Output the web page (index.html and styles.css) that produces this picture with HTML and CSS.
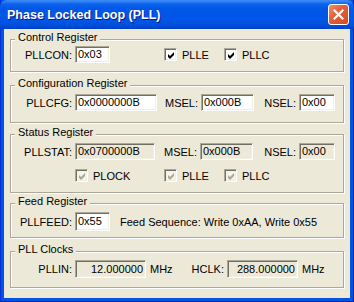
FILE: index.html
```html
<!DOCTYPE html>
<html lang="en">

<head>
    <meta charset="UTF-8">
    <title>Phase Locked Loop (PLL)</title>
    <link rel="stylesheet" href="styles.css">
</head>

<body>
    <div class="window">
        <div class="titlebar">
            <span class="title">Phase Locked Loop (PLL)</span>
            <span class="close-btn">
                <svg width="19" height="19" viewBox="0 0 19 19">
                    <path d="M5.5 5.5 L13.5 13.5 M13.5 5.5 L5.5 13.5" stroke="#fff" stroke-width="2.2" stroke-linecap="square" />
                </svg>
            </span>
        </div>

        <div class="client">
            <!-- Control Register -->
            <div class="group g1">
                <div class="group-title">Control Register</div>
                <div class="row row-first">
                    <span class="lbl">PLLCON:</span>
                    <span class="field w35">0x03</span>
                    <span class="chk-item chk-push w60">
                        <span class="chk"><svg width="9" height="9" viewBox="0 0 9 9"><path d="M1 3 L3 5 L7 1 L7 4 L3 8 L1 6 Z" fill="#000" /></svg></span>PLLE
                    </span>
                    <span class="chk-item">
                        <span class="chk"><svg width="9" height="9" viewBox="0 0 9 9"><path d="M1 3 L3 5 L7 1 L7 4 L3 8 L1 6 Z" fill="#000" /></svg></span>PLLC
                    </span>
                </div>
            </div>

            <!-- Configuration Register -->
            <div class="group g2">
                <div class="group-title">Configuration Register</div>
                <div class="row">
                    <span class="lbl">PLLCFG:</span>
                    <span class="field w82">0x0000000B</span>
                    <span class="lbl-mid w41">MSEL:</span>
                    <span class="field w53">0x000B</span>
                    <span class="lbl-mid w42">NSEL:</span>
                    <span class="field w36">0x00</span>
                </div>
            </div>

            <!-- Status Register -->
            <div class="group g3">
                <div class="group-title">Status Register</div>
                <div class="row">
                    <span class="lbl">PLLSTAT:</span>
                    <span class="field disabled w80">0x0700000B</span>
                    <span class="lbl-mid w42">MSEL:</span>
                    <span class="field disabled w53">0x000B</span>
                    <span class="lbl-mid w43">NSEL:</span>
                    <span class="field disabled w36">0x00</span>
                </div>
                <div class="row row-checks">
                    <span class="chk-item w89">
                        <span class="chk disabled"><svg width="9" height="9" viewBox="0 0 9 9"><path d="M1 3 L3 5 L7 1 L7 4 L3 8 L1 6 Z" fill="#ACA899" /></svg></span>PLOCK
                    </span>
                    <span class="chk-item w60">
                        <span class="chk disabled"><svg width="9" height="9" viewBox="0 0 9 9"><path d="M1 3 L3 5 L7 1 L7 4 L3 8 L1 6 Z" fill="#ACA899" /></svg></span>PLLE
                    </span>
                    <span class="chk-item">
                        <span class="chk disabled"><svg width="9" height="9" viewBox="0 0 9 9"><path d="M1 3 L3 5 L7 1 L7 4 L3 8 L1 6 Z" fill="#ACA899" /></svg></span>PLLC
                    </span>
                </div>
            </div>

            <!-- Feed Register -->
            <div class="group g4">
                <div class="group-title">Feed Register</div>
                <div class="row">
                    <span class="lbl">PLLFEED:</span>
                    <span class="field tall w35">0x55</span>
                    <span class="note">Feed Sequence: Write 0xAA, Write 0x55</span>
                </div>
            </div>

            <!-- PLL Clocks -->
            <div class="group g5">
                <div class="group-title">PLL Clocks</div>
                <div class="row">
                    <span class="lbl">PLLIN:</span>
                    <span class="field disabled num mid w71">12.000000</span>
                    <span class="unit w29">MHz</span>
                    <span class="lbl-mid w45">HCLK:</span>
                    <span class="field disabled num mid w71">288.000000</span>
                    <span class="unit">MHz</span>
                </div>
            </div>
        </div>
    </div>
</body>

</html>
```

FILE: styles.css
```css
body {
    margin: 0;
    font-family: "Liberation Sans", Arial, sans-serif;
    font-size: 11px;
    color: #000;
}

.window {
    width: 354px;
    height: 302px;
    display: flex;
    flex-direction: column;
    background-color: #0054E3;
    box-shadow: inset 1px 0 #0831D9, inset -1px 0 #001EA0, inset 0 -1px #001EA0;
    box-sizing: border-box;
}

/* title bar */
.titlebar {
    height: 29px;
    display: flex;
    align-items: center;
    justify-content: space-between;
    padding: 0 5px 0 7px;
    box-sizing: border-box;
    border-radius: 7px 7px 0 0;
    background: linear-gradient(#3D8DF8 0, #2A7CF5 2px, #0E63EC 4px, #0058E8 8px, #0056E6 20px, #0050DC 25px, #0040C4 29px);
}

.title {
    color: #fff;
    font-weight: bold;
    font-size: 12.5px;
    text-shadow: 1px 1px #0A1A8A;
    margin-top: 1px;
}

.close-btn {
    width: 21px;
    height: 21px;
    box-sizing: border-box;
    border: 1px solid #fff;
    border-radius: 3px;
    background: linear-gradient(135deg, #F0916E 0, #E2613D 40%, #D24A22 100%);
    display: flex;
    align-items: center;
    justify-content: center;
}

/* client area */
.client {
    flex-grow: 1;
    margin: 0 4px 4px;
    background-color: #ECE9D8;
    padding: 10px 0 0 6px;
    display: flex;
    flex-direction: column;
}

.group {
    width: 334px;
    box-sizing: border-box;
    border: 1px solid #ACA899;
    box-shadow: inset 1px 1px #fff, 1px 1px #fff;
    display: flex;
    flex-direction: column;
}

.g1 { height: 33px; }
.g2 { height: 38px; margin-top: 13px; }
.g3 { height: 59px; margin-top: 11px; }
.g4 { height: 35px; margin-top: 10px; }
.g5 { height: 37px; margin-top: 13px; }

.group-title {
    align-self: flex-start;
    margin: -9px 0 0 4px;
    padding: 0 3px;
    line-height: 13px;
    background-color: #ECE9D8;
}

/* rows */
.row {
    display: flex;
    align-items: center;
    margin-top: 4px;
}

.row-first {
    margin-top: 2px;
}

.row-checks {
    margin-top: 9px;
    padding-left: 64px;
}

.lbl {
    width: 61px;
    margin-right: 3px;
    text-align: right;
    white-space: nowrap;
}

.lbl-mid {
    margin-right: 3px;
    text-align: right;
}

.field {
    height: 17px;
    box-sizing: border-box;
    border: 1px solid;
    border-color: #ACA899 #fff #fff #ACA899;
    box-shadow: inset 1px 1px #716F64, inset -1px -1px #F1EFE2;
    background-color: #fff;
    padding: 0 2px;
    line-height: 15px;
    white-space: nowrap;
}

.field.disabled {
    background-color: #ECE9D8;
}

.field.tall {
    height: 19px;
    line-height: 17px;
}

.field.mid {
    height: 18px;
    line-height: 16px;
}

.field.num {
    text-align: right;
    padding-right: 2px;
}

.note {
    margin-left: 10px;
}

.unit {
    margin-left: 4px;
}

/* check boxes */
.chk-item {
    display: flex;
    align-items: center;
    white-space: nowrap;
}

.chk-push {
    margin-left: 54px;
}

.chk {
    width: 13px;
    height: 13px;
    box-sizing: border-box;
    border: 1px solid;
    border-color: #ACA899 #fff #fff #ACA899;
    box-shadow: inset 1px 1px #716F64, inset -1px -1px #F1EFE2;
    background-color: #fff;
    margin-right: 5px;
    display: flex;
    align-items: center;
    justify-content: center;
}

.chk svg {
    display: block;
    margin: 1px 0 0 1px;
}

.chk.disabled {
    background-color: #F5F4EA;
}

/* widths */
.w29 { width: 29px; }
.w35 { width: 35px; }
.w36 { width: 36px; }
.w41 { width: 41px; }
.w42 { width: 42px; }
.w43 { width: 43px; }
.w45 { width: 45px; }
.w53 { width: 53px; }
.w60 { width: 60px; }
.w71 { width: 71px; }
.w80 { width: 80px; }
.w82 { width: 82px; }
.w89 { width: 89px; }
```
